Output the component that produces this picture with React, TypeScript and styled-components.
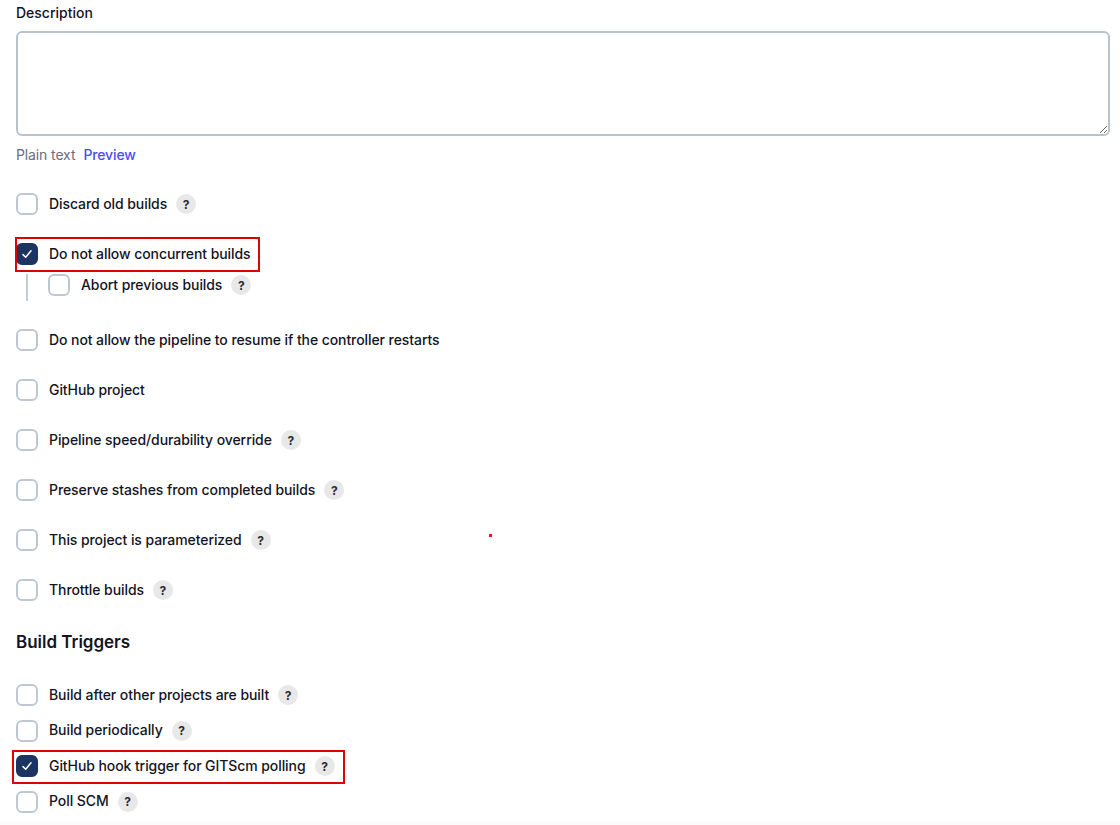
import React from 'react';
import styled, {createGlobalStyle} from 'styled-components';

const GlobalStyle = createGlobalStyle`
  html, body {
    margin: 0;
    padding: 0;
    background: #fff;
  }
  body {
    font-family: Inter, "Liberation Sans", sans-serif;
    color: #14141f;
    -webkit-font-smoothing: antialiased;
  }
`;

type RowProps = {
  label: string;
  help?: boolean;
  checked?: boolean;
};

const Option = ({label, help, checked}: RowProps) => (
  <OptionRow>
    <CheckBox $checked={checked}>
      {checked && (
        <svg width="12" height="12" viewBox="0 0 12 12" fill="none">
          <path
            d="M2 6.6 4.7 9.3 10 2.8"
            stroke="#fff"
            strokeWidth="1.5"
            strokeLinecap="round"
            strokeLinejoin="round"
          />
        </svg>
      )}
    </CheckBox>
    <OptionLabel>{label}</OptionLabel>
    {help && <HelpBadge>?</HelpBadge>}
  </OptionRow>
);

export default function App() {
  return (
    <Page>
      <GlobalStyle />
      <FieldLabel>Description</FieldLabel>
      <DescriptionInput />
      <PreviewLine>
        <PlainText>Plain text</PlainText>
        <PreviewLink>Preview</PreviewLink>
      </PreviewLine>

      <OptionGroup>
        <Option label="Discard old builds" help />
        <div>
          <Marked>
            <Option label="Do not allow concurrent builds" checked />
            <RedBox $left={-1} $top={-6} $width={245} $height={35} />
          </Marked>
          <SubOptions>
            <Option label="Abort previous builds" help />
          </SubOptions>
        </div>
        <Option label="Do not allow the pipeline to resume if the controller restarts" />
        <Option label="GitHub project" />
        <Option label="Pipeline speed/durability override" help />
        <Option label="Preserve stashes from completed builds" help />
        <Marked>
          <Option label="This project is parameterized" help />
          <RedDot />
        </Marked>
        <Option label="Throttle builds" help />
      </OptionGroup>

      <SectionTitle>Build Triggers</SectionTitle>

      <TriggerGroup>
        <Option label="Build after other projects are built" help />
        <Option label="Build periodically" help />
        <Marked>
          <Option label="GitHub hook trigger for GITScm polling" checked help />
          <RedBox $left={-4} $top={-5} $width={333} $height={34} />
        </Marked>
        <Option label="Poll SCM" help />
      </TriggerGroup>
    </Page>
  );
}

const Page = styled.div`
  box-sizing: border-box;
  width: 1120px;
  height: 825px;
  overflow: hidden;
  padding: 4px 10px 0 16px;
  box-shadow: inset 0 -4px 0 #fcfcfc;
`;

const FieldLabel = styled.div`
  font-size: 14px;
  font-weight: 500;
  line-height: 17px;
  margin-bottom: 10px;
`;

const DescriptionInput = styled.textarea`
  display: block;
  box-sizing: border-box;
  width: 1094px;
  height: 105px;
  margin: 0;
  padding: 8px;
  background: #fff;
  border: 2px solid #b8c3ce;
  border-radius: 6px;
  outline: none;
`;

const PreviewLine = styled.div`
  display: flex;
  gap: 8px;
  margin-top: 10px;
  font-size: 14px;
  line-height: 17px;
  letter-spacing: -0.12px;
`;

const PlainText = styled.span`
  color: #6d6b80;
`;

const PreviewLink = styled.span`
  color: #4a4df0;
  font-weight: 500;
`;

const OptionGroup = styled.div`
  display: flex;
  flex-direction: column;
  gap: 28px;
  margin-top: 30px;
`;

const TriggerGroup = styled.div`
  display: flex;
  flex-direction: column;
  gap: 13.67px;
  margin-top: 32px;
`;

const OptionRow = styled.div`
  display: flex;
  align-items: center;
  height: 22px;
`;

const CheckBox = styled.span<{$checked?: boolean}>`
  box-sizing: border-box;
  flex: none;
  display: flex;
  align-items: center;
  justify-content: center;
  width: 22px;
  height: 22px;
  border-radius: 6px;
  border: 2px solid ${p => (p.$checked ? '#1c3461' : '#bec8d2')};
  background: ${p => (p.$checked ? '#1c3461' : '#fff')};
`;

const OptionLabel = styled.span`
  margin-left: 11px;
  padding-bottom: 2px;
  font-size: 14px;
  font-weight: 500;
  line-height: 17px;
  letter-spacing: -0.08px;
  white-space: nowrap;
`;

const HelpBadge = styled.span`
  flex: none;
  display: flex;
  align-items: center;
  justify-content: center;
  width: 20px;
  height: 20px;
  margin-left: 9px;
  border-radius: 50%;
  background: #e8e8e9;
  font-size: 12px;
  font-weight: 700;
  color: #2a2a36;
`;

const SubOptions = styled.div`
  margin: 9px 0 0 10px;
  padding: 0 0 5px 20px;
  border-left: 2px solid #c4ccd4;
`;

const SectionTitle = styled.h2`
  margin: 31px 0 0;
  font-size: 17px;
  font-weight: 600;
  line-height: 20px;
  letter-spacing: -0.02px;
`;

const Marked = styled.div`
  position: relative;
`;

const RedBox = styled.div<{$left: number; $top: number; $width: number; $height: number}>`
  position: absolute;
  box-sizing: border-box;
  left: ${p => p.$left}px;
  top: ${p => p.$top}px;
  width: ${p => p.$width}px;
  height: ${p => p.$height}px;
  border: 2px solid #e00000;
  pointer-events: none;
`;

const RedDot = styled.div`
  position: absolute;
  left: 473px;
  top: 5px;
  width: 3px;
  height: 3px;
  background: #f01818;
`;
